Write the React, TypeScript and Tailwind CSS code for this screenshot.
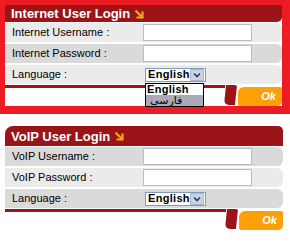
import React from 'react';

const Arrow = () => (
  <svg width="10" height="10" viewBox="0 0 10 10" className="ml-[4px] shrink-0">
    <path d="M1.5 1.5 L8 8" stroke="#f7a51e" strokeWidth="2.2" fill="none" />
    <path d="M2.5 8.5 H8.5 V2.5" stroke="#f7a51e" strokeWidth="2.2" fill="none" />
  </svg>
);

const Input = () => <div className="w-[109px] h-[17px] bg-white border border-[#bdbdbd]" />;

const FakeSelect = () => (
  <div className="ml-[2px] w-[61px] h-[14px] bg-white border border-[#7f9db9] flex items-center">
    <span className="flex-1 pl-[2px] text-[11px] font-bold leading-none tracking-[0.3px] text-black">English</span>
    <span className="w-[16px] h-[12px] mr-[1px] bg-[#c9d3e6] border border-[#a7b5cf] rounded-[1px] flex items-center justify-center">
      <svg width="8" height="6" viewBox="0 0 8 6">
        <path d="M1 1.5 L4 4.5 L7 1.5" stroke="#253c6a" strokeWidth="1.6" fill="none" />
      </svg>
    </span>
  </div>
);

function Row({ label, dark, children }: { label: string; dark?: boolean; children: React.ReactNode }) {
  return (
    <div className={`h-[19px] flex items-center rounded-r-[6px] ${dark ? 'bg-[#dadada]' : 'bg-[#ebebeb]'}`}>
      <span className="w-[138px] pl-[7px] text-[11px] text-black">{label}</span>
      {children}
    </div>
  );
}

function Footer() {
  return (
    <div className="flex h-[21px]">
      <div className="flex-1 h-[3px] bg-[#9b1418]" />
      <div className="w-[11px] h-[20px] bg-[#9b1418] rounded-bl-[5px] rounded-tr-[2px] -skew-x-[6deg] mr-[2px]" />
      <div className="w-[44px] h-[19px] mt-[2px] bg-[#fd9f07] rounded-tl-[6px] rounded-br-[5px] rounded-bl-[2px] rounded-tr-[2px] flex items-center justify-end pr-[6px]">
        <span className="text-[11px] font-bold italic text-white leading-none">Ok</span>
      </div>
    </div>
  );
}

export default function App() {
  return (
    <div className="w-[290px] h-[245px] bg-white relative" style={{ fontFamily: '"Liberation Sans", Arial, sans-serif' }}>
      {/* Internet login */}
      <div className="bg-[#ed1c24] pt-[5px] pl-[5px] pr-[8px] pb-[8px]">
        <div className="bg-white flex flex-col">
          <div className="h-[17px] bg-[#9b1418] rounded-br-[5px] flex items-center pl-[6px]">
            <span className="text-[13px] font-bold text-white leading-none">Internet User Login</span>
            <Arrow />
          </div>
          <div className="flex flex-col gap-[2px] mt-[1px]">
            <Row label="Internet Username :">
              <Input />
            </Row>
            <Row label="Internet Password :" dark>
              <Input />
            </Row>
            <Row label="Language :">
              <FakeSelect />
            </Row>
          </div>
          <div className="mt-[1px]">
            <Footer />
          </div>
        </div>
      </div>

      {/* open language list */}
      <div className="absolute left-[145px] top-[83px] w-[59px] border border-black bg-white">
        <div className="h-[11px] flex items-center pl-[1px] text-[11px] font-bold tracking-[0.3px] leading-none text-black">English</div>
        <div className="h-[11px] flex items-center pl-[4px] bg-[#a9a9b9] text-[11px] leading-none text-black" style={{ fontFamily: '"DejaVu Sans", sans-serif' }}>فارسی</div>
      </div>

      {/* VoIP login */}
      <div className="mt-[12px] pl-[5px] pr-[7px] flex flex-col">
        <div className="h-[20px] bg-[#9b1418] rounded-tl-[8px] rounded-tr-[5px] flex items-center pl-[6px]">
          <span className="text-[13px] font-bold text-white leading-none">VoIP User Login</span>
          <Arrow />
        </div>
        <div className="flex flex-col gap-[2px] mt-[1px]">
          <Row label="VoIP Username :" dark>
            <Input />
          </Row>
          <Row label="VoIP Password :">
            <Input />
          </Row>
          <Row label="Language :" dark>
            <FakeSelect />
          </Row>
        </div>
        <div className="mt-[1px]">
          <Footer />
        </div>
      </div>
    </div>
  );
}
